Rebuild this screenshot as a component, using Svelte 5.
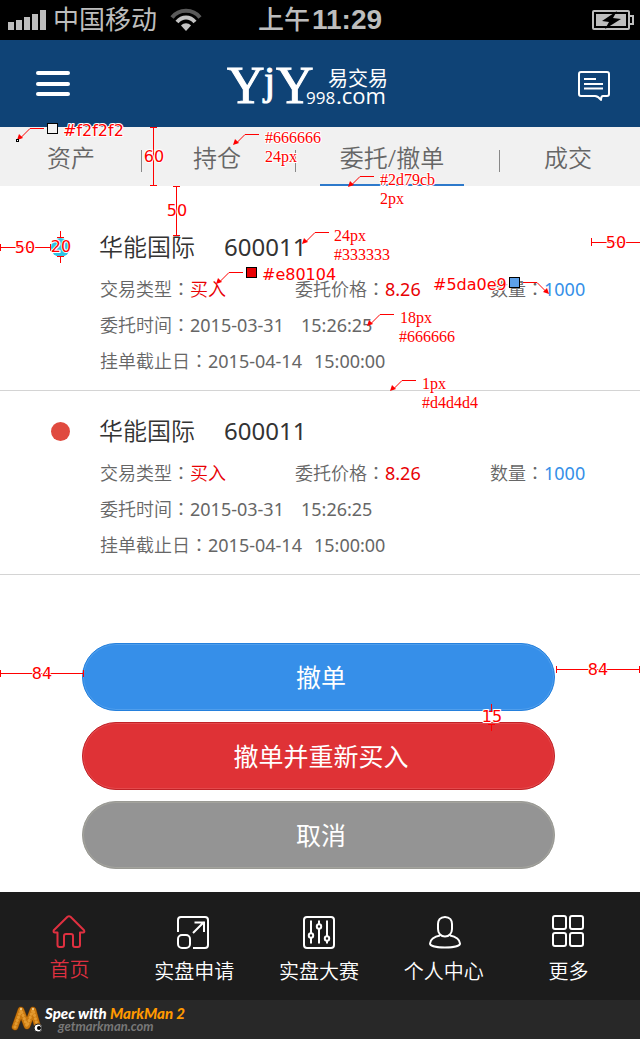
<script>
  let selected = $state('');

  const tabs = [
    { label: '资产' },
    { label: '持仓' },
    { label: '委托/撤单', active: true },
    { label: '成交' }
  ];

  const orders = [
    { id: 'a', tone: 'cyan', name: '华能国际', code: '600011' },
    { id: 'b', tone: 'red', name: '华能国际', code: '600011' }
  ];

  const leaders = [
    { d: 'M44 128.5H30L20 138.5', tip: 'M17 140l2-6 4 4z' },
    { d: 'M259 134.5H245L236 143.5', tip: 'M233 145l2-6 4 4z' },
    { d: 'M329 232.5H315L305 242.5', tip: 'M302 244l2-6 4 4z' },
    { d: 'M374 176.5H360L351 185.5', tip: 'M348 187l2-6 4 4z' },
    { d: 'M243 272.5H229L219 282.5', tip: 'M216 284l2-6 4 4z' },
    { d: 'M523 282.5H537L547 292.5', tip: 'M549 294l-2-6-4 4z' },
    { d: 'M394 314.5H380L370 324.5', tip: 'M367 326l2-6 4 4z' },
    { d: 'M416 380.5H402L393 389.5', tip: 'M390 391l2-6 4 4z' }
  ];

  const rulers = [
    'M153.5 127.5V185.5M150 127.5h7M150 185.5h7',
    'M176.5 186.5V235.5M173 186.5h7M173 235.5h7',
    'M0.5 244v7M0 247.5H50M50.5 244v7',
    'M60.5 231v6M57 237.5h7M57 256.5h7M60.5 257v6',
    'M591.5 238v8M591 242.5H640',
    'M0.5 670v7M0 673.5H83M83.5 670v7',
    'M556.5 666v7M556 669.5H640M639.5 666v7',
    'M491.5 704v7M488 711.5h7M488 724.5h7M491.5 725v6'
  ];

  const sizes = [
    { x: 154, y: 162, t: '60' },
    { x: 177, y: 216, t: '50' },
    { x: 25, y: 253, t: '50' },
    { x: 61, y: 252, t: '20' },
    { x: 616, y: 248, t: '50' },
    { x: 42, y: 679, t: '84' },
    { x: 598, y: 675, t: '84' },
    { x: 492, y: 722, t: '15' }
  ];

  const swatches = [
    { x: 47, y: 123, fill: '#f2f2f2', tx: 63, ty: 136, t: '#f2f2f2' },
    { x: 246, y: 267, fill: '#e80104', tx: 262, ty: 280, t: '#e80104' },
    { x: 509, y: 277, fill: '#5da0e9', tx: 433, ty: 290, t: '#5da0e9' }
  ];

  const notes = [
    { x: 265, y: 143, t: '#666666' },
    { x: 265, y: 162, t: '24px' },
    { x: 380, y: 185, t: '#2d79cb' },
    { x: 380, y: 204, t: '2px' },
    { x: 334, y: 241, t: '24px' },
    { x: 334, y: 260, t: '#333333' },
    { x: 400, y: 323, t: '18px' },
    { x: 399, y: 342, t: '#666666' },
    { x: 422, y: 389, t: '1px' },
    { x: 422, y: 408, t: '#d4d4d4' }
  ];
</script>

{#snippet colon()}<span class="colon">：</span>{/snippet}

<div class="page">
  <div class="status">
    <div class="carrier">
      <svg width="38" height="20" viewBox="0 0 38 20" fill="#bdbdbd" aria-hidden="true">
        <path d="M0 12h6v8H0zM8 10h6v10H8zM16 7h6v13h-6zM24 4h6v16h-6zM32 0h6v20h-6z" />
      </svg>
      <span>中国移动</span>
      <svg width="32" height="24" viewBox="0 0 32 24" fill="none" aria-hidden="true">
        <path d="M2 9.500C9 0.500 23 0.500 30 9.500" stroke="#5a5a5a" stroke-width="4" />
        <path d="M7 14C12 8 20 8 25 14" stroke="#c4c4c4" stroke-width="4" />
        <path d="M16 23l-5-5.500c3-3 7-3 10 0z" fill="#c4c4c4" />
      </svg>
    </div>
    <div class="clock"><span>上午</span><b>11:29</b></div>
    <svg class="battery" width="42" height="20" viewBox="0 0 42 20" aria-hidden="true">
      <rect x="1" y="1" width="36" height="18" rx="1" fill="none" stroke="#bdbdbd" stroke-width="2" />
      <path d="M38 6h3v8h-3" fill="none" stroke="#bdbdbd" stroke-width="2" />
      <rect x="4" y="4" width="30" height="12" fill="#bdbdbd" />
      <path d="M25 1L10 11l7 1-4 7 16-10-8-1z" fill="#000" />
    </svg>
  </div>

  <header>
    <button class="icon" aria-label="菜单">
      <svg width="34" height="26" viewBox="0 0 34 26" fill="#fff">
        <rect y="0" width="34" height="4" rx="2" /><rect y="11" width="34" height="4" rx="2" /><rect y="21" width="34" height="4" rx="2" />
      </svg>
    </button>
    <svg class="logo" width="162" height="44" viewBox="0 0 162 44" fill="#fff">
      <text class="serif" x="0" y="41" font-size="52">Y</text>
      <text class="serif" x="37" y="32" font-size="40">j</text>
      <text class="serif" x="49" y="41" font-size="52">Y</text>
      <text x="101" y="24" font-size="20">易交易</text>
      <text x="79" y="42" font-size="17">998</text>
      <text x="109" y="42" font-size="22">.com</text>
    </svg>
    <button class="icon" aria-label="消息">
      <svg width="32" height="34" viewBox="0 -4 32 34" fill="none" stroke="#fff" stroke-width="2">
        <path d="M3 1h26q2 0 2 2v20q0 2-2 2h-4q-2 0-2 4q-3-4-6-4H3q-2 0-2-2V3q0-2 2-2z" stroke-linejoin="round" />
        <path d="M6 8h12M6 13h19M6 17.500h19" />
      </svg>
    </button>
  </header>

  <nav class="tabs" aria-label="账户">
    {#each tabs as tab}
      <div class="cell" class:wide={tab.active}>
        <a href="#tab" class:active={tab.active}>{tab.label}</a>
      </div>
    {/each}
  </nav>

  <main>
    <div class="orders">
      {#each orders as o}
        <article>
          <input type="radio" name="order" id={'order-' + o.id} value={o.id} class={o.tone} bind:group={selected} />
          <div class="body">
            <label class="title" for={'order-' + o.id}><span>{o.name}</span><span class="digits">{o.code}</span></label>
            <div class="trio">
              <span>交易类型{@render colon()}<em>买入</em></span>
              <span>委托价格{@render colon()}<em class="digits">8.26</em></span>
              <span>数量{@render colon()}<i class="digits">1000</i></span>
            </div>
            <div class="line">委托时间{@render colon()}<span class="digits date">2015-03-31</span><span class="digits">15:26:25</span></div>
            <div class="line">挂单截止日{@render colon()}<span class="digits date near">2015-04-14</span><span class="digits">15:00:00</span></div>
          </div>
        </article>
      {/each}
    </div>
    <div class="actions">
      <button class="blue">撤单</button>
      <button class="crimson">撤单并重新买入</button>
      <button class="gray">取消</button>
    </div>
  </main>

  <nav class="bottom" aria-label="主导航">
    <a href="#home" class="current">
      <svg width="34" height="34" viewBox="0 0 34 34" fill="none" stroke="currentColor" stroke-width="2" stroke-linejoin="round">
        <path d="M15.500 1.800L1.800 15.200Q1 17.500 3 17.500H5.500V30Q5.500 32 7.500 32H10Q12 32 12 30V21Q12 19 14 19H19Q21 19 21 21V30Q21 32 23 32H26Q28 32 28 30V17.500H31Q33 17.500 32 15.200L18.500 1.800Q17 0.600 15.500 1.800Z" />
      </svg>
      <span>首页</span>
    </a>
    <a href="#apply">
      <svg width="34" height="34" viewBox="0 0 34 34" fill="none" stroke="currentColor" stroke-width="2">
        <path d="M1 17V5Q1 2 4 2H28Q31 2 31 5V30Q31 33 28 33H16" />
        <rect x="1" y="20" width="12" height="13" rx="4" />
        <path d="M16 18L27 7M17.500 7.500H27V17" />
      </svg>
      <span>实盘申请</span>
    </a>
    <a href="#match">
      <svg width="34" height="34" viewBox="0 0 34 34" fill="none" stroke="currentColor" stroke-width="2">
        <rect x="2" y="2" width="30" height="31" rx="3" />
        <path d="M9 5.500V18M9 23V28.500M17 5.500V9M17 14V28.500M25 5.500V21M25 26V28.500" />
        <circle cx="9" cy="20.500" r="2.200" /><circle cx="17" cy="11.500" r="2.200" /><circle cx="25" cy="23.500" r="2.200" />
      </svg>
      <span>实盘大赛</span>
    </a>
    <a href="#me">
      <svg width="34" height="34" viewBox="0 0 34 34" fill="none" stroke="currentColor" stroke-width="2">
        <path d="M18 2C13 2 11 5.500 11 9V14C11 18.500 14 21.500 18 21.500S25 18.500 25 14V9C25 5.500 23 2 18 2Z" />
        <path d="M13 20.500C7 21.500 3 25 3 28.500C3 31 10 32.500 18 32.500S33 31 33 28.500C33 25 29 21.500 23 20.500" />
      </svg>
      <span>个人中心</span>
    </a>
    <a href="#more">
      <svg width="34" height="34" viewBox="0 0 34 34" fill="none" stroke="currentColor" stroke-width="2">
        <rect x="1" y="1" width="13" height="13" rx="2" /><rect x="18" y="1" width="13" height="13" rx="2" />
        <rect x="1" y="18" width="13" height="13" rx="2" /><rect x="18" y="18" width="13" height="13" rx="2" />
      </svg>
      <span>更多</span>
    </a>
  </nav>

  <footer>
    <svg width="34" height="30" viewBox="0 0 34 30" fill="none" stroke-linecap="round" stroke-linejoin="round" aria-hidden="true">
      <path d="M4 22L10 5L16 21L22 5L27 23" stroke="#6b3a05" stroke-width="7" />
      <path d="M4 22L10 5L16 21L22 5L27 23" stroke="#c9780f" stroke-width="6" />
      <path d="M4 22L10 5L16 21L22 5L27 23" stroke="#e39a30" stroke-width="3" stroke-dasharray="0.200 3.200" />
      <path d="M10 4v0M22 4v0" stroke="#fbe0a8" stroke-width="2" />
      <circle cx="27" cy="23" r="4" fill="#fff" stroke="#222" />
      <circle cx="28" cy="23" r="2" fill="#000" stroke="none" />
    </svg>
    <div class="credit">
      <strong>Spec with <span>MarkMan 2</span></strong>
      <small>getmarkman.com</small>
    </div>
  </footer>

  <svg class="marks" width="640" height="1039" viewBox="0 0 640 1039">
    <g fill="none" stroke="#f00">
      {#each rulers as d}<path {d} />{/each}
      {#each leaders as l}<path d={l.d} /><path d={l.tip} fill="#f00" stroke="none" />{/each}
    </g>
    <rect x="16.500" y="139.500" width="2" height="2" fill="#fff" stroke="#000" />
    {#each swatches as s}
      <rect x={s.x + 0.5} y={s.y + 0.5} width="10" height="10" fill={s.fill} stroke="#000" />
      <text class="num" x={s.tx} y={s.ty}>{s.t}</text>
    {/each}
    {#each sizes as s}<text class="num" text-anchor="middle" x={s.x} y={s.y}>{s.t}</text>{/each}
    {#each notes as n}<text class="note" x={n.x} y={n.y}>{n.t}</text>{/each}
  </svg>
</div>

<style>
  :global(body) { margin: 0; background: #fff; }
  .page {
    position: relative;
    font-family: "Noto Sans", "Noto Sans CJK SC", sans-serif;
    font-weight: 350;
    color: #666;
  }
  button { border: 0; background: none; padding: 0; font: inherit; color: inherit; cursor: pointer; }
  a { color: inherit; text-decoration: none; }
  svg { display: block; flex: none; }

  .status {
    display: grid;
    grid-template-columns: 1fr auto 1fr;
    align-items: center;
    height: 40px;
    padding: 0 6px 0 8px;
    background: #000;
    color: #bdbdbd;
    font-family: "Liberation Sans", "Noto Sans CJK SC", sans-serif;
    font-weight: 400;
    font-size: 26px;
    line-height: 40px;
  }
  .carrier { display: flex; align-items: center; gap: 7px; }
  .carrier svg:last-child { margin-left: 6px; }
  .clock { display: flex; gap: 2px; padding-right: 2px; }
  .clock span { font-weight: 500; }
  .clock b { font-size: 28px; }
  .battery { justify-self: end; }

  header {
    display: flex;
    align-items: center;
    justify-content: space-between;
    height: 87px;
    padding: 0 30px 0 36px;
    background: #0f4376;
  }
  .logo {
    margin-right: 32px;
    overflow: visible;
    font-family: "Open Sans", "Noto Sans CJK SC", sans-serif;
    font-weight: 400;
  }
  .serif { font-family: "Liberation Serif", serif; stroke: #fff; stroke-width: 1px; }

  .tabs {
    display: grid;
    grid-template-columns: 142fr 154fr 204fr 140fr;
    height: 59px;
    background: #f1f1f1;
    font-size: 24px;
  }
  .cell { display: flex; justify-content: center; position: relative; }
  .cell:nth-child(even) { padding-right: 4px; }
  .cell.wide { padding-right: 12px; }
  .cell:not(:last-child)::after {
    content: "";
    position: absolute;
    right: 0;
    top: 23px;
    width: 1px;
    height: 22px;
    background: #888;
  }
  .cell a { box-sizing: border-box; height: 59px; padding: 2px 20px 0; line-height: 58px; }
  .cell a.active { border-bottom: 2px solid #2d79cb; }

  .orders { padding-top: 21px; }
  article {
    display: flex;
    padding: 16px 50px 11px 51px;
    border-bottom: 1px solid #d4d4d4;
  }
  input[type="radio"] {
    appearance: none;
    flex: none;
    width: 19px;
    height: 19px;
    margin: 15px 29px 0 0;
    border-radius: 50%;
  }
  .cyan { background: #30c4e4; }
  .red { background: #e04a3f; }
  .body { flex: 1; font-size: 18px; line-height: 36px; white-space: nowrap; }
  .title { display: flex; gap: 29px; color: #333; font-size: 24px; line-height: 48px; }
  .trio { display: grid; grid-template-columns: 195px 195px 1fr; }
  .trio em, .trio i { font-style: normal; }
  .trio em { color: #e80104; }
  .trio i { color: #358fe8; }
  .trio, .line { padding-left: 1px; }
  .digits { font-weight: 400; }
  .colon { font-family: "Noto Sans CJK TC", sans-serif; line-height: 1; }
  .date { margin-right: 17px; }
  .date.near { margin-right: 12px; }

  .actions { display: flex; flex-direction: column; gap: 11px; padding: 68px 85px 23px 82px; }
  .actions button {
    height: 68px;
    padding: 0 0 2px 5px;
    border: 1px solid;
    border-radius: 34px;
    color: #fff;
    font-size: 25px;
    font-weight: 400;
  }
  .actions .blue { background: #368fe9; border-color: #2480dd; box-shadow: inset 0 0 0 1px #4f9eec; }
  .actions .crimson { background: #df3236; border-color: #c02227; box-shadow: inset 0 0 0 1px #e4494c; }
  .actions .gray { background: #949494; border-color: #9a9a94; box-shadow: inset 0 0 0 1px #a3a39d; }

  .bottom {
    display: flex;
    box-sizing: border-box;
    height: 108px;
    padding: 0 9px 0 7px;
    background: #1c1c1c;
    color: #fff;
  }
  .bottom a {
    display: flex;
    flex: 1;
    flex-direction: column;
    align-items: center;
    padding-top: 23px;
    font-size: 20px;
    line-height: 46px;
  }
  .bottom .current { color: #df3040; line-height: 42px; }

  footer { display: flex; align-items: center; height: 39px; padding-left: 11px; background: #282828; }
  .credit { display: flex; flex-direction: column; font-family: Lato, sans-serif; font-style: italic; font-weight: 700; line-height: 13px; }
  .credit strong { font-size: 15px; color: #fff; }
  .credit strong span { color: #f90; }
  .credit small { padding-left: 13px; font-size: 13px; color: #777; }

  .marks { position: absolute; left: 0; top: 0; pointer-events: none; }
  .marks text { fill: #f00; stroke: #fff; stroke-width: 2px; paint-order: stroke; stroke-linejoin: round; font-weight: 400; font-size: 16px; }
  .num { font-family: "DejaVu Sans", sans-serif; }
  .note { font-family: "Liberation Serif", serif; }
</style>
